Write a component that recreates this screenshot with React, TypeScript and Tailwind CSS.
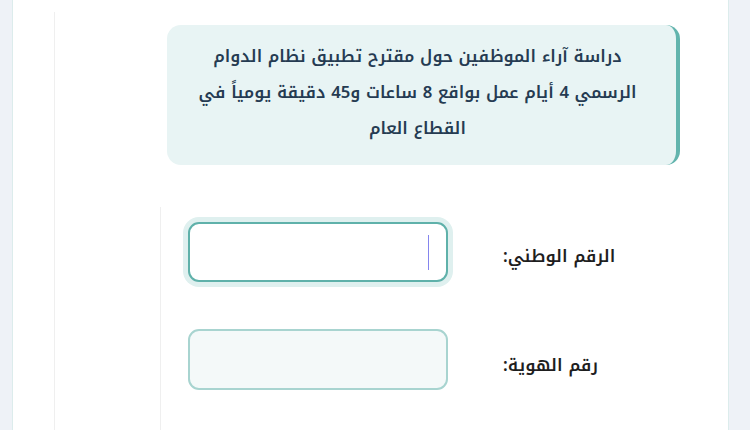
import React from "react";

const font = { fontFamily: '"Noto Kufi Arabic","Noto Sans Arabic","DejaVu Sans",sans-serif' };

export default function App() {
  return (
    <div className="w-[750px] h-[430px] bg-[#eef2f7] flex overflow-hidden" style={font}>
      <div className="ml-[12px] w-[717px] h-full bg-white border-l border-r border-[#dcecec] flex">
        <div className="ml-[41px] mt-[12px] flex-1 border-l border-[#efefef] flex flex-col">
          <div
            dir="rtl"
            className="ml-[112px] mr-[48px] mt-[13px] h-[140px] rounded-[14px] bg-[#e8f4f4] border-r-4 border-[#62b4ad] pt-[14px] pb-[18px] pr-[24px] pl-[16px] text-center text-[#253b52] text-[16.7px] font-semibold leading-[36px]"
          >
            <div>دراسة آراء الموظفين حول مقترح تطبيق نظام الدوام</div>
            <div>الرسمي 4 أيام عمل بواقع 8 ساعات و45 دقيقة يومياً في</div>
            <div>القطاع العام</div>
          </div>
          <div className="ml-[105px] mt-[42px] flex-1 border-l border-[#efefef] flex flex-col pt-[15px] pl-[27px] gap-[47px]">
            <div className="flex items-center">
              <div className="w-[260px] h-[60px] rounded-[11px] border-2 border-[#5fb1aa] bg-white ring-[5px] ring-[#dff0ef] flex items-center justify-end pr-[17px]">
                <span className="w-px h-[35px] bg-[#8585ee]" />
              </div>
              <div dir="rtl" className="ml-[55px] mt-[10px] text-[17px] font-semibold text-[#1e1e1e]">الرقم الوطني:</div>
            </div>
            <div className="flex items-center">
              <div className="w-[260px] h-[61px] rounded-[11px] border-2 border-[#a8d4d0] bg-[#f4f9f9]" />
              <div dir="rtl" className="ml-[55px] mt-[13px] text-[17px] font-semibold text-[#1e1e1e]">رقم الهوية:</div>
            </div>
          </div>
        </div>
      </div>
    </div>
  );
}
